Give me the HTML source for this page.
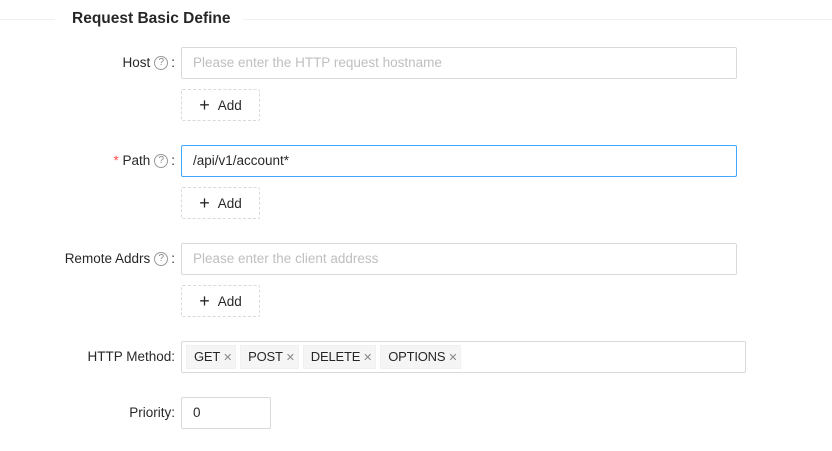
<!DOCTYPE html>
<html><head><style>
body{margin:0;width:832px;height:451px;background:#fff;font-family:"Liberation Sans",sans-serif;font-size:13.5px;color:rgba(0,0,0,.85);position:relative;overflow:hidden}
.a{position:absolute;box-sizing:border-box}
.line{height:1px;background:#f0f0f0;top:19px}
.lbl{right:657px;height:32px;line-height:32px;white-space:nowrap}
.q{display:inline-block;width:14px;height:14px;border:1px solid #999;border-radius:50%;font-size:10px;line-height:12px;text-align:center;color:#888;vertical-align:middle;position:relative;top:0px;margin:0 3px 0 4px;box-sizing:border-box}
.inp{left:181px;width:556px;height:32px;border:1px solid #d9d9d9;border-radius:2px;padding-left:11px;line-height:30px;color:#bfbfbf}
.add{left:181px;width:79px;height:32px;border:1px dashed #d9d9d9;border-radius:2px;line-height:30px;text-align:center;color:rgba(0,0,0,.85)}
.add b{font-weight:normal;font-size:18px;margin-right:8px;vertical-align:-1px}
.tag{display:inline-block;background:#f5f5f5;border:1px solid #f0f0f0;height:24px;line-height:22px;padding:0 3px 0 7px;margin:3px 0 0 4px;box-sizing:border-box;font-size:13px;letter-spacing:-0.2px}
.tag i{font-style:normal;color:#888;font-size:11px;margin-left:3px}
</style></head><body>
<div class="a line" style="left:0;width:55px"></div>
<div class="a line" style="left:243px;width:589px"></div>
<div class="a" style="left:72px;top:9px;font-size:15.5px;font-weight:bold;line-height:20px">Request Basic Define</div>

<div class="a lbl" style="top:47px">Host<span class="q">?</span>:</div>
<div class="a inp" style="top:47px">Please enter the HTTP request hostname</div>
<div class="a add" style="top:89px"><b>+</b>Add</div>

<div class="a lbl" style="top:145px"><span style="color:#ff4d4f">*</span> Path<span class="q">?</span>:</div>
<div class="a inp" style="top:145px;border-color:#40a9ff;color:rgba(0,0,0,.85)">/api/v1/account*</div>
<div class="a add" style="top:187px"><b>+</b>Add</div>

<div class="a lbl" style="top:243px">Remote Addrs<span class="q">?</span>:</div>
<div class="a inp" style="top:243px">Please enter the client address</div>
<div class="a add" style="top:285px"><b>+</b>Add</div>

<div class="a lbl" style="top:341px">HTTP Method:</div>
<div class="a" style="left:181px;top:341px;width:565px;height:32px;border:1px solid #d9d9d9;border-radius:2px"><span class="tag">GET<i>✕</i></span><span class="tag">POST<i>✕</i></span><span class="tag">DELETE<i>✕</i></span><span class="tag">OPTIONS<i>✕</i></span></div>

<div class="a lbl" style="top:397px">Priority:</div>
<div class="a inp" style="top:397px;width:90px;color:rgba(0,0,0,.85)">0</div>
</body></html>
